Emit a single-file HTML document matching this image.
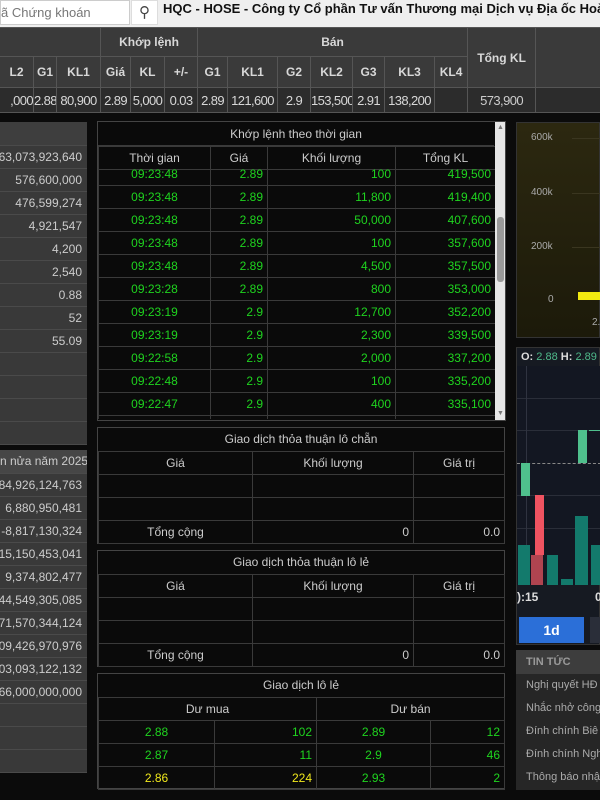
<!DOCTYPE html><html><head><meta charset="utf-8"><style>
*{margin:0;padding:0;box-sizing:border-box}
body{width:600px;height:800px;overflow:hidden;background:#0b0b0b;font-family:"Liberation Sans",sans-serif;font-size:12px;color:#ddd;position:relative}
.abs{position:absolute}
table{border-collapse:collapse;table-layout:fixed}
td{overflow:hidden;white-space:nowrap}
.g{color:#1fd41f}.y{color:#f0e81c}
#top{left:0;top:0;width:600px;height:27px;background:#efefef}
#hdr td{border:1px solid #555;text-align:center;background:#3a3a3a;color:#d8d8d8;font-weight:bold;font-size:12px}
#hdr tr.d td{background:#2c2c2c;font-weight:normal;font-size:13px;letter-spacing:-0.6px}
.lp td{height:23px;border-bottom:1px solid #4a4a4a;background:#393939;color:#ccc;text-align:right;padding-right:5px;font-size:12px;direction:rtl}
.bx{border:1px solid #444;background:#0a0a0a}
.bx td{border:1px solid #3a3a3a;height:23px;font-size:12px}
.bx td.t{text-align:center;color:#ccc}
.bx td.r{text-align:right;padding-right:4px}
.bx td.c{text-align:center}
</style></head><body>
<div id="top" class="abs">
 <div class="abs" style="left:0;top:0;width:130px;height:25px;background:#fff;border:1px solid #ccc;color:#777;font-size:13px;line-height:23px;padding-left:0">ã Chứng khoán</div>
 <div class="abs" style="left:131px;top:0;width:27px;height:25px;background:#fff;border:1px solid #ddd;color:#444;font-size:15px;line-height:23px;text-align:center">&#9906;</div>
 <div class="abs" style="left:163px;top:0;height:25px;line-height:17px;font-size:13px;font-weight:bold;color:#111;white-space:nowrap">HQC - HOSE - Công ty Cổ phần Tư vấn Thương mại Dịch vụ Địa ốc Hoàng</div>
</div>
<table id="hdr" class="abs" style="left:-1px;top:27px;width:602px">
<colgroup><col style="width:34px"><col style="width:23px"><col style="width:44px"><col style="width:30px"><col style="width:34px"><col style="width:33px"><col style="width:30px"><col style="width:50px"><col style="width:33px"><col style="width:42px"><col style="width:32px"><col style="width:50px"><col style="width:33px"><col style="width:68px"><col style="width:66px"></colgroup>
<tr style="height:29px"><td colspan="3"></td><td colspan="3">Khớp lệnh</td><td colspan="7">Bán</td><td rowspan="2">Tổng KL</td><td rowspan="2"></td></tr>
<tr style="height:31px"><td>L2</td><td>G1</td><td>KL1</td><td>Giá</td><td>KL</td><td>+/-</td><td>G1</td><td>KL1</td><td>G2</td><td>KL2</td><td>G3</td><td>KL3</td><td>KL4</td></tr>
<tr class="d" style="height:25px"><td class="g" style="text-align:right">,000</td><td class="g">2.88</td><td class="g">80,900</td><td class="g">2.89</td><td class="g">5,000</td><td class="g">0.03</td><td class="g">2.89</td><td class="g">121,600</td><td class="g">2.9</td><td class="g">153,500</td><td class="g">2.91</td><td class="g">138,200</td><td></td><td style="color:#ccc">573,900</td><td></td></tr>
</table>
<table class="lp abs" style="left:0;top:122px;width:87px">
<tr><td style="background:#3e3e3e"></td></tr><tr><td>363,073,923,640</td></tr><tr><td>576,600,000</td></tr><tr><td>476,599,274</td></tr><tr><td>4,921,547</td></tr><tr><td>4,200</td></tr><tr><td>2,540</td></tr><tr><td>0.88</td></tr><tr><td>52</td></tr><tr><td>55.09</td></tr><tr><td></td></tr><tr><td></td></tr><tr><td></td></tr><tr><td></td></tr>
</table>
<table class="lp abs" style="left:0;top:450px;width:87px">
<tr><td style="background:#464646;direction:ltr;text-align:right">n nửa năm 2025</td></tr><tr><td>84,926,124,763</td></tr><tr><td>6,880,950,481</td></tr><tr><td><bdi dir="ltr">-8,817,130,324</bdi></td></tr><tr><td>15,150,453,041</td></tr><tr><td>9,374,802,477</td></tr><tr><td>544,549,305,085</td></tr><tr><td>871,570,344,124</td></tr><tr><td>409,426,970,976</td></tr><tr><td>403,093,122,132</td></tr><tr><td>766,000,000,000</td></tr><tr><td></td></tr><tr><td></td></tr><tr><td></td></tr>
</table>
<!-- box1 -->
<div class="abs bx" style="left:97px;top:121px;width:409px;height:300px;overflow:hidden">
<div class="abs" style="left:0;top:0;width:396px;height:24px;line-height:24px;text-align:center;color:#ccc;border-bottom:1px solid #3a3a3a">Khớp lệnh theo thời gian</div>
<table class="abs" style="left:0;top:24px;width:397px">
<colgroup><col style="width:112px"><col style="width:57px"><col style="width:128px"><col style="width:100px"></colgroup>
<tr><td class="t">Thời gian</td><td class="t">Giá</td><td class="t">Khối lượng</td><td class="t">Tổng KL</td></tr></table>
<div class="abs" style="left:0;top:47px;width:397px;height:250px;overflow:hidden">
<table class="abs g" style="left:0;top:-7px;width:397px">
<colgroup><col style="width:112px"><col style="width:57px"><col style="width:128px"><col style="width:100px"></colgroup>
<tr><td class="c">09:23:48</td><td class="r">2.89</td><td class="r">100</td><td class="r">419,500</td></tr>
<tr><td class="c">09:23:48</td><td class="r">2.89</td><td class="r">11,800</td><td class="r">419,400</td></tr>
<tr><td class="c">09:23:48</td><td class="r">2.89</td><td class="r">50,000</td><td class="r">407,600</td></tr>
<tr><td class="c">09:23:48</td><td class="r">2.89</td><td class="r">100</td><td class="r">357,600</td></tr>
<tr><td class="c">09:23:48</td><td class="r">2.89</td><td class="r">4,500</td><td class="r">357,500</td></tr>
<tr><td class="c">09:23:28</td><td class="r">2.89</td><td class="r">800</td><td class="r">353,000</td></tr>
<tr><td class="c">09:23:19</td><td class="r">2.9</td><td class="r">12,700</td><td class="r">352,200</td></tr>
<tr><td class="c">09:23:19</td><td class="r">2.9</td><td class="r">2,300</td><td class="r">339,500</td></tr>
<tr><td class="c">09:22:58</td><td class="r">2.9</td><td class="r">2,000</td><td class="r">337,200</td></tr>
<tr><td class="c">09:22:48</td><td class="r">2.9</td><td class="r">100</td><td class="r">335,200</td></tr>
<tr><td class="c">09:22:47</td><td class="r">2.9</td><td class="r">400</td><td class="r">335,100</td></tr>
<tr><td></td><td></td><td></td><td></td></tr>
</table></div>
<div class="abs" style="left:397px;top:0;width:11px;height:298px;background:#e6e6e6"><div class="abs" style="left:2px;top:95px;width:7px;height:65px;background:#9a9a9a;border-radius:3px"></div><div class="abs" style="left:2px;top:2px;color:#777;font-size:7px">▲</div><div class="abs" style="left:2px;top:288px;color:#777;font-size:7px">▼</div></div>
</div>
<!-- box2 -->
<div class="abs bx" style="left:97px;top:427px;width:408px;height:117px">
<div style="height:23px;line-height:23px;text-align:center;color:#ccc">Giao dịch thỏa thuận lô chẵn</div>
<table style="width:406px"><colgroup><col style="width:154px"><col style="width:161px"><col style="width:91px"></colgroup>
<tr><td class="t">Giá</td><td class="t">Khối lượng</td><td class="t">Giá trị</td></tr><tr><td></td><td></td><td></td></tr><tr><td></td><td></td><td></td></tr>
<tr><td class="t">Tổng cộng</td><td class="r" style="color:#ccc">0</td><td class="r" style="color:#ccc">0.0</td></tr></table></div>
<!-- box3 -->
<div class="abs bx" style="left:97px;top:550px;width:408px;height:117px">
<div style="height:23px;line-height:23px;text-align:center;color:#ccc">Giao dịch thỏa thuận lô lẻ</div>
<table style="width:406px"><colgroup><col style="width:154px"><col style="width:161px"><col style="width:91px"></colgroup>
<tr><td class="t">Giá</td><td class="t">Khối lượng</td><td class="t">Giá trị</td></tr><tr><td></td><td></td><td></td></tr><tr><td></td><td></td><td></td></tr>
<tr><td class="t">Tổng cộng</td><td class="r" style="color:#ccc">0</td><td class="r" style="color:#ccc">0.0</td></tr></table></div>
<!-- box4 -->
<div class="abs bx" style="left:97px;top:673px;width:408px;height:116px">
<div style="height:23px;line-height:23px;text-align:center;color:#ccc">Giao dịch lô lẻ</div>
<table style="width:406px"><colgroup><col style="width:116px"><col style="width:102px"><col style="width:114px"><col style="width:74px"></colgroup>
<tr><td class="t" colspan="2">Dư mua</td><td class="t" colspan="2">Dư bán</td></tr>
<tr class="g"><td class="c">2.88</td><td class="r">102</td><td class="c">2.89</td><td class="r">12</td></tr>
<tr class="g"><td class="c">2.87</td><td class="r">11</td><td class="c">2.9</td><td class="r">46</td></tr>
<tr><td class="c y">2.86</td><td class="r y">224</td><td class="c g">2.93</td><td class="r g">2</td></tr></table></div>
<!-- chart1 -->
<div class="abs" style="left:516px;top:122px;width:84px;height:216px;background:linear-gradient(#2c2810,#1c1a0a);border:1px solid #333;font-size:10px;color:#aaa">
<div class="abs" style="left:14px;top:9px">600k</div><div class="abs" style="left:14px;top:64px">400k</div><div class="abs" style="left:14px;top:118px">200k</div><div class="abs" style="left:31px;top:171px">0</div>
<div class="abs" style="left:55px;top:15px;width:30px;border-top:1px solid #3a3620"></div><div class="abs" style="left:55px;top:70px;width:30px;border-top:1px solid #3a3620"></div><div class="abs" style="left:55px;top:124px;width:30px;border-top:1px solid #3a3620"></div>
<div class="abs" style="left:61px;top:169px;width:24px;height:8px;background:#f2ea10"></div>
<div class="abs" style="left:75px;top:194px">2.</div></div>
<!-- chart2 -->
<div class="abs" style="left:516px;top:347px;width:84px;height:298px;background:#161a22;border:1px solid #333">
<div class="abs" style="left:4px;top:3px;font-size:11px;font-weight:bold;color:#ddd;white-space:nowrap">O: <span style="color:#4fb98a;font-weight:normal">2.88</span> H: <span style="color:#4fb98a;font-weight:normal">2.89</span></div>
<div class="abs" style="left:0;top:18px;width:84px;height:219px;background:#131722">
<div class="abs" style="left:0;top:32px;width:84px;border-top:1px solid #2a2e39"></div><div class="abs" style="left:0;top:64px;width:84px;border-top:1px solid #2a2e39"></div><div class="abs" style="left:0;top:97px;width:84px;border-top:1px dashed #888"></div><div class="abs" style="left:0;top:129px;width:84px;border-top:1px solid #2a2e39"></div><div class="abs" style="left:0;top:162px;width:84px;border-top:1px solid #2a2e39"></div>
<div class="abs" style="left:9px;top:0;height:219px;border-left:1px solid #2f3340"></div>
<div class="abs" style="left:1px;top:179px;width:12px;height:40px;background:#137a6c"></div>
<div class="abs" style="left:14px;top:189px;width:12px;height:30px;background:#b04450"></div>
<div class="abs" style="left:30px;top:189px;width:11px;height:30px;background:#137a6c"></div>
<div class="abs" style="left:44px;top:213px;width:12px;height:6px;background:#137a6c"></div>
<div class="abs" style="left:58px;top:150px;width:13px;height:69px;background:#137a6c"></div>
<div class="abs" style="left:74px;top:179px;width:10px;height:40px;background:#137a6c"></div>
<div class="abs" style="left:4px;top:97px;width:9px;height:33px;background:#4fc08d"></div>
<div class="abs" style="left:18px;top:129px;width:9px;height:60px;background:#ef5361"></div>
<div class="abs" style="left:61px;top:64px;width:9px;height:33px;background:#4fc08d"></div>
<div class="abs" style="left:72px;top:64px;width:12px;height:1px;background:#4fc08d"></div>
</div>
<div class="abs" style="left:0;top:242px;font-size:12px;font-weight:bold;color:#ddd">):15</div><div class="abs" style="left:78px;top:242px;font-size:12px;font-weight:bold;color:#ddd">0</div>
<div class="abs" style="left:2px;top:269px;width:65px;height:26px;background:#2b6fd8;color:#fff;font-size:14px;font-weight:bold;text-align:center;line-height:26px">1d</div>
<div class="abs" style="left:73px;top:269px;width:12px;height:26px;background:#2a2e39"></div>
</div>
<!-- news -->
<div class="abs" style="left:516px;top:650px;width:84px;height:140px;background:#262626;font-size:11px;color:#aaa;white-space:nowrap;overflow:hidden">
<div style="height:24px;line-height:24px;background:#3d3d3d;padding-left:10px;font-weight:bold;color:#999">TIN TỨC</div>
<div style="height:23px;line-height:23px;padding-left:10px">Nghị quyết HĐ</div>
<div style="height:23px;line-height:23px;padding-left:10px">Nhắc nhở công</div>
<div style="height:23px;line-height:23px;padding-left:10px">Đính chính Biê</div>
<div style="height:23px;line-height:23px;padding-left:10px">Đính chính Ngh</div>
<div style="height:23px;line-height:23px;padding-left:10px">Thông báo nhậ</div>
</div>
</body></html>
